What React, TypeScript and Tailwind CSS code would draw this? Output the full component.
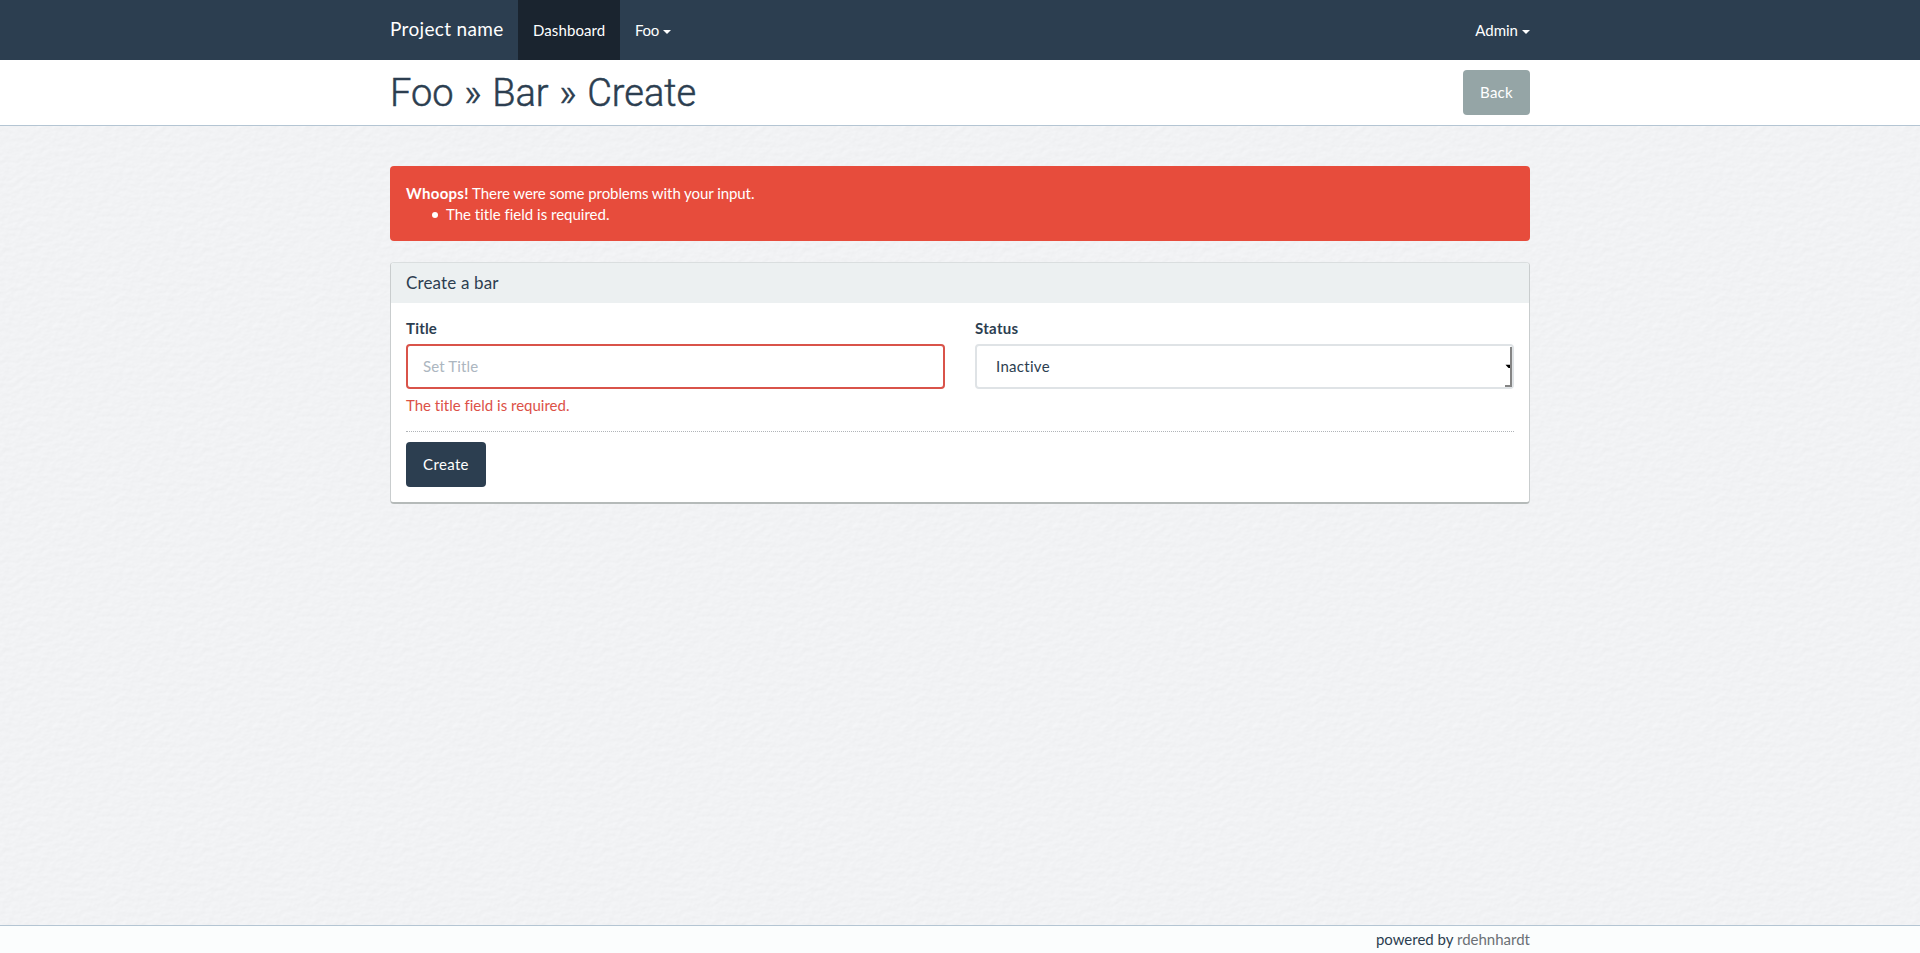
import React from "react";

function Caret() {
  return (
    <span className="ml-1 inline-block h-0 w-0 border-x-4 border-t-4 border-x-transparent border-t-white align-middle" />
  );
}

function Paper() {
  return (
    <svg className="absolute inset-0 h-full w-full" aria-hidden="true">
      <filter id="paper" filterUnits="userSpaceOnUse" x="0" y="0" width="200" height="200" colorInterpolationFilters="sRGB">
        <feTurbulence type="fractalNoise" baseFrequency="0.14 0.2" numOctaves="3" seed="8" stitchTiles="stitch" result="n" />
        <feDiffuseLighting in="n" surfaceScale="0.07" lightingColor="#f1f2f4" diffuseConstant="1.156">
          <feDistantLight azimuth="235" elevation="60" />
        </feDiffuseLighting>
      </filter>
      <pattern id="paper-tile" width="200" height="200" patternUnits="userSpaceOnUse">
        <rect width="200" height="200" filter="url(#paper)" />
      </pattern>
      <rect width="100%" height="100%" fill="url(#paper-tile)" />
    </svg>
  );
}

function Navbar() {
  return (
    <nav className="h-[60px] bg-[#2c3e50] text-white">
      <div className="mx-auto flex h-full w-[1140px] justify-between">
        <div className="flex">
          <a className="w-32 whitespace-nowrap pt-[18px] text-[19px] leading-[21px] tracking-[0.33px]">Project name</a>
          <a className="w-[102px] bg-[#1a242f] pl-[15px] pt-[19.5px] leading-[21px] tracking-[0.1px]">Dashboard</a>
          <a className="px-[15px] pt-[19.5px] leading-[21px] tracking-[-0.3px]">Foo<Caret /></a>
        </div>
        <a className="pt-[19.5px] leading-[21px]">Admin<Caret /></a>
      </div>
    </nav>
  );
}

function PageHeader() {
  return (
    <header className="h-[66px] border-b border-[#b4c5d3] bg-white">
      <div className="mx-auto flex w-[1140px] items-start justify-between pt-[10px]">
        <h1 className="pt-px font-['Roboto','Open_Sans',sans-serif] text-[38px] font-light leading-[45px] [word-spacing:1.4px] [-webkit-text-stroke:0.5px_#2c3e50]">
          Foo » Bar » Create
        </h1>
        <button className="h-[45px] w-[67px] rounded bg-[#95a5a6] tracking-[0.25px] text-white">Back</button>
      </div>
    </header>
  );
}

export default function App() {
  return (
    <div className="relative isolate flex h-[953px] flex-col overflow-hidden bg-[#f0f2f3] font-['Lato',sans-serif] text-[15px] leading-[21px] text-[#2c3e50] [font-variant-ligatures:none]">
      <div className="absolute inset-0 -z-10">
        <Paper />
      </div>
      <Navbar />
      <PageHeader />
      <main className="mx-auto w-[1140px] flex-1 pt-10">
        <div className="mb-[21px] h-[75px] rounded bg-[#e74c3c] px-4 pt-[17px] text-white">
          <strong className="tracking-[0.3px]">Whoops!</strong>
          <span className="tracking-[-0.07px]"> There were some problems with your input.</span>
          <ul className="pl-[26px]">
            <li className="flex items-center gap-2">
              <span className="h-1.5 w-1.5 rounded-full bg-white" />
              The title field is required.
            </li>
          </ul>
        </div>
        <section className="h-[242px] overflow-hidden rounded border border-b-2 border-[#c9cdce] border-b-[#b5bab9] border-t-[#dadedf] bg-white">
          <h3 className="h-10 bg-[#ecf0f1] px-[15px] pt-[10px] text-[17px] leading-[19px] tracking-[0.15px]">Create a bar</h3>
          <div className="p-[15px]">
            <div className="grid h-[114px] grid-cols-2 gap-[30px] border-b border-dotted border-[#b0b4b8]">
              <div>
                <label className="mb-[5px] block font-bold tracking-[0.2px]">Title</label>
                <input
                  placeholder="Set Title"
                  className="block h-[45px] w-full rounded border-2 border-[#d9534a] bg-white px-[15px] pb-0.5 tracking-[0.15px] placeholder:text-[#acb6c0]"
                />
                <span className="mt-[6px] block text-[#dc5147]">The title field is required.</span>
              </div>
              <div>
                <label className="mb-[5px] block font-bold tracking-[0.3px]">Status</label>
                <div className="relative flex h-[45px] items-center rounded border-2 border-[#dfe3e6] bg-white px-[19px] tracking-[0.3px]">
                  Inactive
                  <svg className="absolute right-0 top-0" width="8" height="41" viewBox="0 0 8 41" aria-hidden="true">
                    <path d="M7 1V40M1 40H8" fill="none" stroke="#858585" strokeWidth="2" />
                    <path d="M1.5 18.7H6V22H4.5Z" fill="#000" />
                  </svg>
                </div>
              </div>
            </div>
            <button className="mt-[10px] h-[45px] w-20 rounded bg-[#2c3e50] tracking-[0.35px] text-white">Create</button>
          </div>
        </section>
      </main>
      <footer className="h-7 border-t border-[#b4c5d3] bg-[#fbfdfd]">
        <div className="mx-auto w-[1140px] pt-[3px] text-right">
          powered by <a className="text-[#6b7075]">rdehnhardt</a>
        </div>
      </footer>
    </div>
  );
}
